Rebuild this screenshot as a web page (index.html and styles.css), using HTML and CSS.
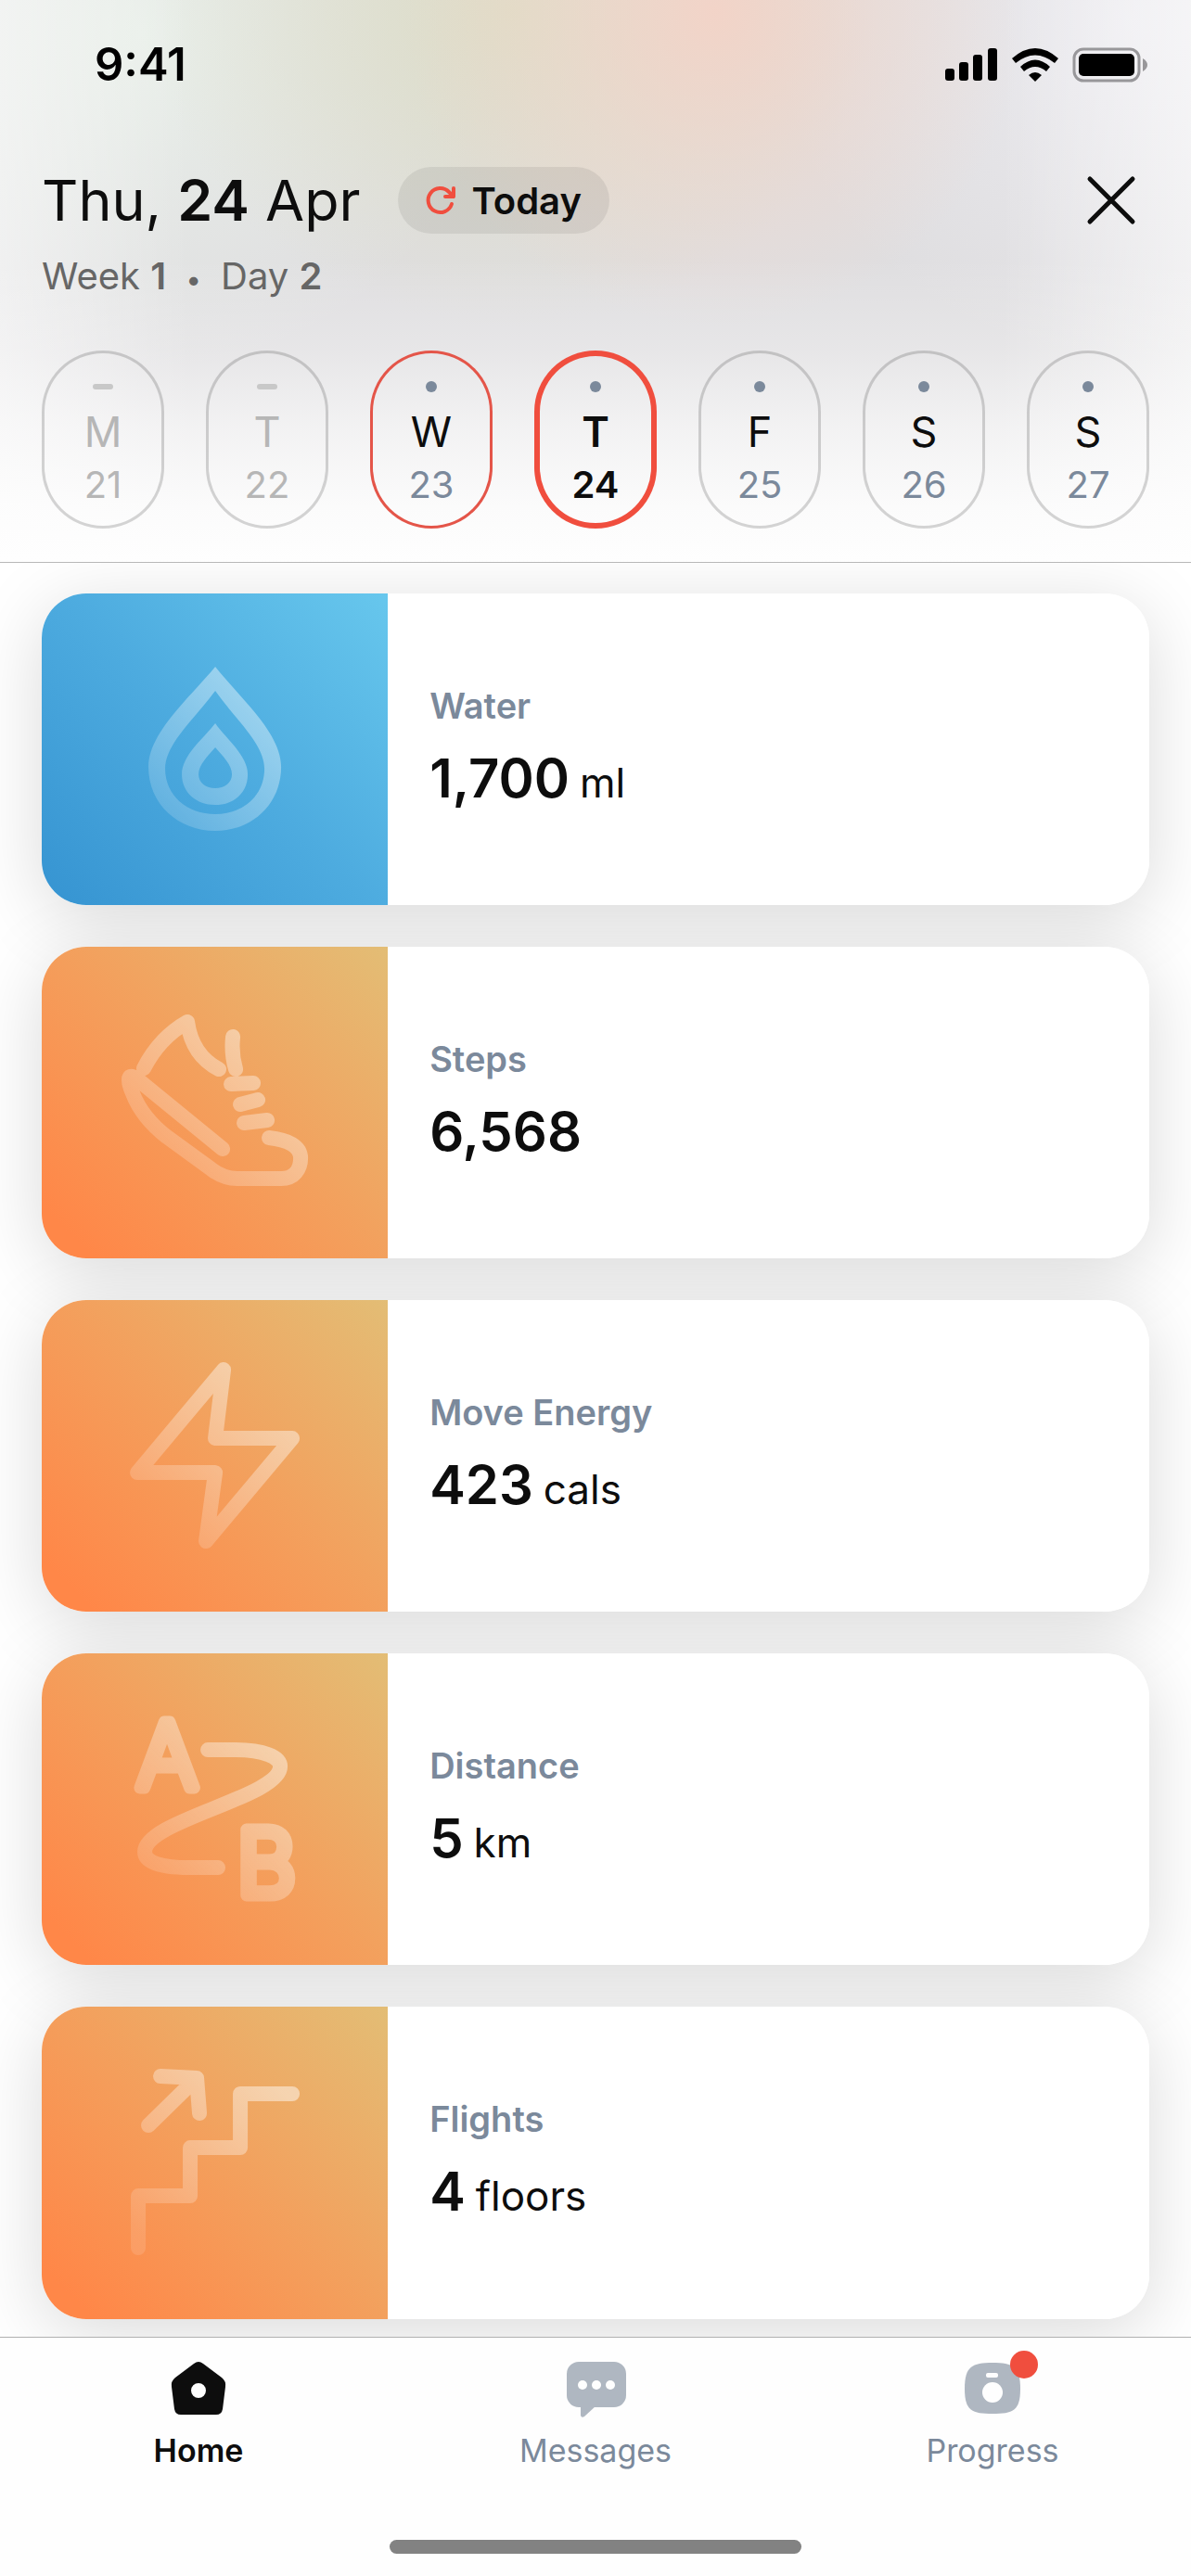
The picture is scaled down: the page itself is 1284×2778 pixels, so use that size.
FILE: index.html
```html
<!DOCTYPE html>
<html lang="en">
<head>
<meta charset="utf-8">
<meta name="viewport" content="width=device-width, initial-scale=1">
<title>Daily activity</title>
<link rel="stylesheet" href="styles.css">
</head>
<body>
<div class="app">
  <header class="header">
    <div class="status">
      <span class="clock">9:41</span>
      <svg class="status-icons" width="220" height="40" viewBox="0 0 220 40" aria-hidden="true">
        <rect x="0" y="24" width="10" height="13" rx="3"/>
        <rect x="15" y="17" width="10" height="20" rx="3"/>
        <rect x="30" y="9" width="10" height="28" rx="3"/>
        <rect x="46" y="2" width="10" height="35" rx="3"/>
        <path d="M72 13Q97 -9 122 13L118 18Q97 1 76 18Z"/>
        <path d="M81 22Q97 7 113 22L109 27Q97 17 85 27Z"/>
        <path d="M90 31Q97 25 104 31L97 38Z"/>
        <rect class="battery-shell" x="139" y="3" width="70" height="34" rx="10"/>
        <rect x="144" y="8" width="60" height="24" rx="5"/>
        <path class="battery-cap" d="M213 13Q218 16 218 20T213 27Z"/>
      </svg>
    </div>
    <div class="title-row">
      <h1 class="date">Thu, <strong>24</strong> Apr</h1>
      <button class="today" type="button">
        <svg width="36" height="36" viewBox="0 0 36 36" aria-hidden="true">
          <path d="M30 22A13 13 0 1 1 27 9L32 14M32 5V14H23"/>
        </svg>
        Today
      </button>
      <button class="close" type="button" aria-label="Close">
        <svg width="56" height="56" viewBox="0 0 56 56" aria-hidden="true"><path d="M5 5L51 51M51 5L5 51"/></svg>
      </button>
    </div>
    <p class="program">Week <strong>1</strong><span class="sep">•</span>Day <strong>2</strong></p>
    <div class="days">
      <button class="day off" type="button" disabled><i class="mark"></i><span class="letter">M</span><span class="number">21</span></button>
      <button class="day off" type="button" disabled><i class="mark"></i><span class="letter">T</span><span class="number">22</span></button>
      <button class="day current" type="button"><i class="mark"></i><span class="letter">W</span><span class="number">23</span></button>
      <button class="day selected" type="button" aria-pressed="true"><i class="mark"></i><span class="letter">T</span><span class="number">24</span></button>
      <button class="day" type="button"><i class="mark"></i><span class="letter">F</span><span class="number">25</span></button>
      <button class="day" type="button"><i class="mark"></i><span class="letter">S</span><span class="number">26</span></button>
      <button class="day" type="button"><i class="mark"></i><span class="letter">S</span><span class="number">27</span></button>
    </div>
  </header>

  <main class="list">
    <article class="card">
      <div class="tile water">
        <svg viewBox="0 0 373 336" aria-hidden="true">
          <defs>
            <linearGradient id="sheen" gradientUnits="userSpaceOnUse" x1="262" y1="94" x2="112" y2="250">
              <stop offset="0" stop-color="#fff" stop-opacity=".48"/>
              <stop offset="1" stop-color="#fff" stop-opacity=".12"/>
            </linearGradient>
          </defs>
          <path fill="url(#sheen)" fill-rule="evenodd" d="M187 79C160 112 115 150 115 187C115 227 147 256 187 256S258 227 258 187C258 150 213 112 187 79ZM187 105C165 135 133 162 133 189C133 218 157 238 187 238S240 218 240 189C240 162 208 135 187 105ZM187 140C176 155 151 174 151 195C151 215 167 228 187 228S222 215 222 195C222 174 197 155 187 140ZM187 166C179 175 169 185 169 195C169 204 177 210 187 210S205 204 205 195C205 185 195 175 187 166Z"/>
        </svg>
      </div>
      <div class="info"><h2 class="name">Water</h2><p class="value"><strong>1,700</strong> <span>ml</span></p></div>
    </article>
    <article class="card">
      <div class="tile">
        <svg viewBox="0 0 373 336" aria-hidden="true">
          <path class="line" d="M110 131Q127 98 157 81Q162 117 191 132M206 97Q204 115 209 132M204 148L228 147M214 170L233 165M218 190L243 187M195 218L102 142C90 134 94 149 98 158Q108 184 135 205L183 240Q196 250 212 250H258C272 250 279 240 279 228C279 215 265 208 245 206"/>
        </svg>
      </div>
      <div class="info"><h2 class="name">Steps</h2><p class="value"><strong>6,568</strong></p></div>
    </article>
    <article class="card">
      <div class="tile">
        <svg viewBox="0 0 373 336" aria-hidden="true">
          <path class="line" d="M196 75L187 149H270L177 260L187 186H103Z"/>
        </svg>
      </div>
      <div class="info"><h2 class="name">Move Energy</h2><p class="value"><strong>423</strong> <span>cals</span></p></div>
    </article>
    <article class="card">
      <div class="tile">
        <svg viewBox="0 0 373 336" aria-hidden="true">
          <mask id="route" maskUnits="userSpaceOnUse" x="0" y="0" width="373" height="336">
            <path class="line solid" d="M179 104H207C240 104 257 112 257 122C257 155 111 180 111 214C111 226 130 231 159 231H190"/>
            <text class="point" x="135" y="145" text-anchor="middle">A</text>
            <text class="point" x="242" y="261" text-anchor="middle">B</text>
          </mask>
          <rect width="373" height="336" fill="url(#sheen)" mask="url(#route)"/>
        </svg>
      </div>
      <div class="info"><h2 class="name">Distance</h2><p class="value"><strong>5</strong> <span>km</span></p></div>
    </article>
    <article class="card">
      <div class="tile">
        <svg viewBox="0 0 373 336" aria-hidden="true">
          <path class="line" d="M104 260V204H160V152H214V94H270M115 128L167 77M128 75L167 77L170 115"/>
        </svg>
      </div>
      <div class="info"><h2 class="name">Flights</h2><p class="value"><strong>4</strong> <span>floors</span></p></div>
    </article>
  </main>

  <nav class="tabs">
    <a class="tab active" href="#home" aria-current="page">
      <svg width="64" height="64" viewBox="0 0 64 64" aria-hidden="true">
        <path fill-rule="evenodd" d="M27 5Q32 1 37 5L57 20Q62 24 61 30L58 54Q57 60 51 60H13Q7 60 6 54L3 30Q2 24 7 20ZM32 26a8 8 0 1 0 0 16a8 8 0 1 0 0-16Z"/>
      </svg>
      Home
    </a>
    <a class="tab" href="#messages">
      <svg width="64" height="64" viewBox="0 0 64 64" aria-hidden="true">
        <rect x="1" y="3" width="64" height="49" rx="13"/>
        <path d="M16 50V61Q17 64 20 62L33 50Z"/>
        <g class="hole"><circle cx="18" cy="28" r="5"/><circle cx="33" cy="28" r="5"/><circle cx="48" cy="28" r="5"/></g>
      </svg>
      Messages
    </a>
    <a class="tab" href="#progress">
      <svg width="64" height="64" viewBox="0 0 64 64" aria-hidden="true">
        <path d="M32 4C54 4 62 8 62 32S54 59 32 59S2 56 2 32S10 4 32 4Z"/>
        <g class="hole"><rect x="25" y="15" width="13" height="5" rx="2"/><circle cx="32" cy="36" r="11"/></g>
        <circle class="badge" cx="66" cy="6" r="15"/>
      </svg>
      Progress
    </a>
    <div class="indicator"></div>
  </nav>
</div>
</body>
</html>
```
FILE: styles.css
```css
:root {
  --ink: #0d0d0d;
  --slate: #7b899b;
  --red: #f04e3e;
  --gutter: 45px;
}

* { box-sizing: border-box; }

body {
  margin: 0;
  background: #fff;
  color: var(--ink);
  font-family: Inter, "Liberation Sans", sans-serif;
  font-weight: 400;
}

h1, h2, p { margin: 0; font-weight: inherit; }
strong { font-weight: 600; }
svg { display: block; }

button {
  margin: 0;
  padding: 0;
  border: 0;
  background: none;
  color: inherit;
  font: inherit;
}

.app {
  display: flex;
  flex-direction: column;
  min-height: 100vh;
}

/* Header */
.header {
  padding: 46px var(--gutter) 36px;
  border-bottom: 1px solid #b8b8b8;
  background:
    linear-gradient(rgba(254, 254, 254, 0) 46%, rgba(254, 254, 254, .25) 62%, rgba(254, 254, 254, .62) 76%, rgba(254, 254, 254, .9) 90%, #fefefe),
    linear-gradient(90deg, rgba(255, 255, 255, .5), rgba(255, 255, 255, 0) 16%, rgba(255, 255, 255, 0) 84%, rgba(255, 255, 255, .55)),
    radial-gradient(ellipse 26% 56% at 60% 2%, rgba(243, 211, 199, .95), rgba(240, 214, 202, .5) 50%, rgba(240, 214, 202, 0)),
    radial-gradient(ellipse 30% 56% at 43% 2%, rgba(221, 221, 198, 1), rgba(221, 221, 198, 0)),
    radial-gradient(ellipse 30% 60% at 12% 6%, rgba(234, 241, 234, .9), rgba(234, 241, 234, 0)),
    radial-gradient(ellipse 30% 60% at 95% 4%, rgba(236, 235, 240, .9), rgba(236, 235, 240, 0)),
    #dfdee0;
}

.status {
  display: flex;
  align-items: center;
  justify-content: space-between;
  height: 48px;
  padding-left: 57px;
  color: #000;
}
.clock { font-size: 49px; font-weight: 600; line-height: 48px; }
.battery-shell { fill: none; stroke: #98979a; stroke-width: 3; }
.battery-cap { fill: #98979a; }

.title-row {
  display: flex;
  align-items: center;
  height: 72px;
  margin-top: 86px;
}
.date { font-size: 61px; line-height: 72px; }

.today {
  display: flex;
  align-items: center;
  gap: 16px;
  height: 72px;
  margin-left: 40px;
  padding: 0 30px 0 28px;
  border-radius: 36px;
  background: rgba(0, 0, 0, .07);
  font-size: 40px;
  font-weight: 600;
}
.today path, .close path {
  fill: none;
  stroke: var(--red);
  stroke-width: 4;
  stroke-linecap: round;
  stroke-linejoin: round;
}
.close { margin: 0 13px 0 auto; }
.close path { stroke: var(--ink); stroke-width: 5; }

.program {
  margin-top: 22px;
  color: #666;
  font-size: 40px;
  line-height: 48px;
}
.sep { margin: 0 21px; font-size: 30px; line-height: 30px; }

.days {
  display: flex;
  justify-content: space-between;
  margin-top: 56px;
}
.day {
  display: flex;
  flex-direction: column;
  align-items: center;
  width: 132px;
  padding: 33px 0 25px;
  border-radius: 66px;
  box-shadow: inset 0 0 0 3px rgba(0, 0, 0, .16);
}
.mark {
  width: 12px;
  height: 12px;
  border-radius: 6px;
  background: var(--slate);
}
.letter { margin-top: 15px; font-size: 45px; line-height: 56px; }
.number { margin-top: 7px; color: var(--slate); font-size: 40px; line-height: 44px; }

.off, .off .number { color: #b6b6b6; }
.off .mark {
  width: 22px;
  height: 6px;
  margin: 3px 0;
  border-radius: 3px;
  background: #c8c8c8;
}
.current { box-shadow: inset 0 0 0 3px #e45549; }
.selected { box-shadow: inset 0 0 0 6px var(--red); }
.selected .letter, .selected .number { color: var(--ink); font-weight: 600; }

/* Metric cards */
.list {
  display: flex;
  flex: 1;
  flex-direction: column;
  gap: 45px;
  padding: 33px var(--gutter) 19px;
  overflow: hidden;
  isolation: isolate;
}
.card {
  position: relative;
  display: flex;
  min-height: 336px;
  border-radius: 48px;
  background: #fff;
}
/* Shadows sit behind every card so that neighbours stay clean */
.card::before {
  content: "";
  position: absolute;
  z-index: -1;
  inset: 0;
  border-radius: 48px;
  box-shadow: 0 15px 80px rgba(0, 0, 0, .15);
}
.tile {
  flex: 0 0 31.25%;
  display: grid;
  place-items: center;
  border-radius: 48px 0 0 48px;
  background: linear-gradient(45deg, #ff8748 8%, #f3a05d 52%, #e3bd75);
}
.tile svg { width: 100%; }
.water { background: linear-gradient(45deg, #3795d2 3%, #4dabdf 50%, #67c7ed); }

.line {
  fill: none;
  stroke: url(#sheen);
  stroke-width: 16;
  stroke-linecap: round;
  stroke-linejoin: round;
}
.solid { stroke: #fff; }
.point {
  fill: #fff;
  stroke: #fff;
  stroke-width: 13;
  stroke-linejoin: round;
  font-size: 98px;
  font-weight: 200;
}

.info {
  display: flex;
  flex-direction: column;
  justify-content: center;
  gap: 18px;
  padding: 0 var(--gutter) 4px;
}
.name { color: var(--slate); font-size: 38px; font-weight: 600; line-height: 48px; }
.value { display: flex; align-items: baseline; gap: 11px; font-size: 44px; line-height: 72px; }
.value strong { font-size: 58px; }
.value span { line-height: 44px; }

/* Tab bar */
.tabs {
  display: grid;
  grid-template-columns: repeat(3, 1fr);
  padding: 23px 0 24px;
  border-top: 1px solid #b0b0b0;
  background: #fefefe;
}
.tab {
  display: flex;
  flex-direction: column;
  align-items: center;
  gap: 15px;
  color: var(--slate);
  font-size: 34px;
  line-height: 40px;
  text-decoration: none;
}
.tab svg { overflow: visible; fill: #afb7c1; }
.tab .hole { fill: #fefefe; }
.tab .badge { fill: var(--red); }
.active { color: var(--ink); font-weight: 600; }
.active svg { fill: var(--ink); }
.indicator {
  grid-column: 1 / -1;
  justify-self: center;
  width: 444px;
  max-width: 60%;
  height: 15px;
  margin-top: 76px;
  border-radius: 8px;
  background: #828282;
}
```
